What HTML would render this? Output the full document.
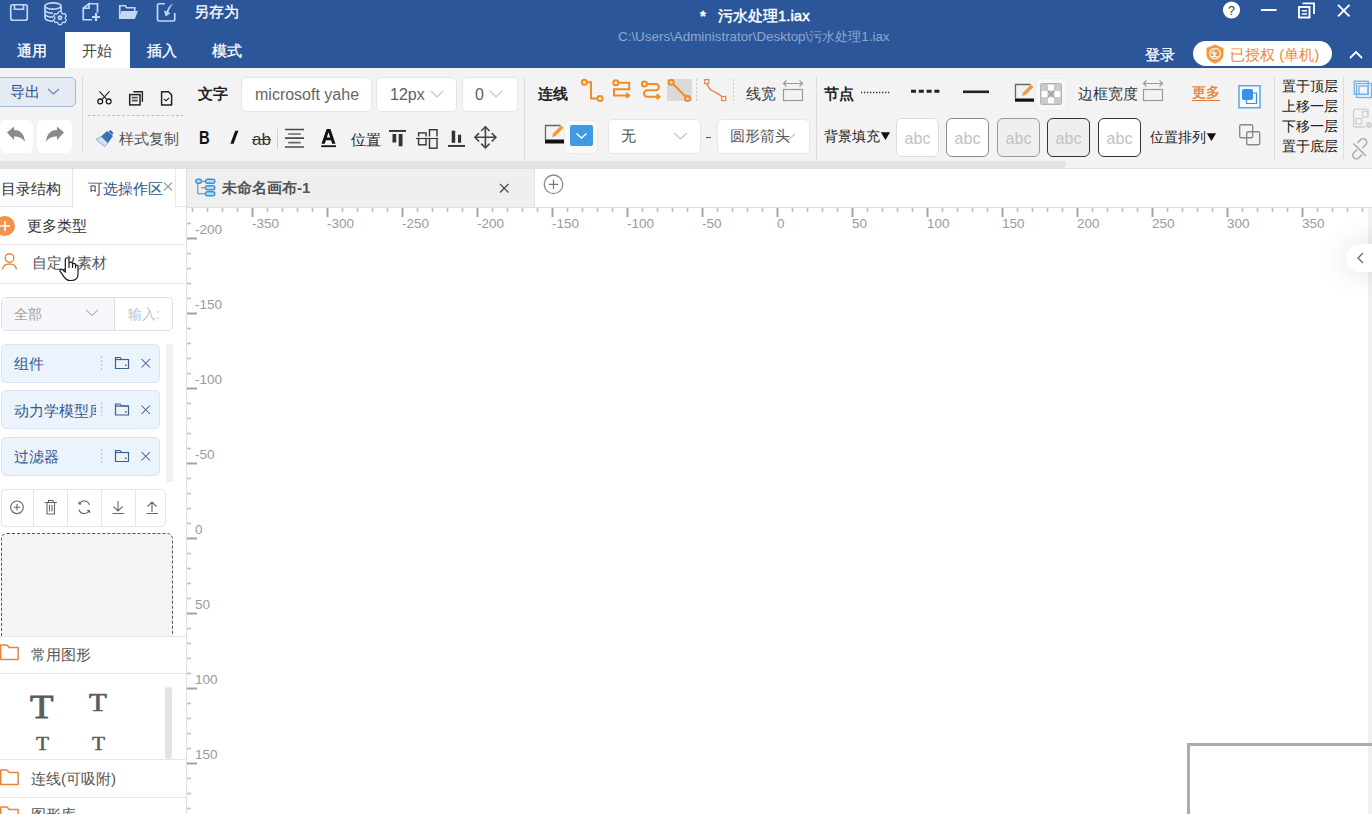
<!DOCTYPE html>
<html><head><meta charset="utf-8">
<style>
*{box-sizing:border-box;margin:0;padding:0}
html,body{width:1372px;height:814px;overflow:hidden;background:#fff;font-family:"Liberation Sans",sans-serif;position:relative;color:#333}
.a{position:absolute;white-space:nowrap}
.t15{font-size:15px;line-height:15px}
.t14{font-size:14px;line-height:14px}
.t13{font-size:13px;line-height:13px}
.wt{color:#fff;-webkit-text-stroke:.3px #fff}
.b{font-weight:bold}
svg{position:absolute;overflow:visible}
.box{position:absolute;background:#fff;border:1px solid #e6e6e6;border-radius:5px}
.sep{position:absolute;width:1px;background:#dcdcdc}
.abc{position:absolute;top:118px;width:43px;height:39px;border-radius:6px;font-size:16px;line-height:39px;text-align:center;color:#c2c2c2}
.item{position:absolute;left:1px;width:159px;height:39px;background:#ebf3fd;border:1px solid #d8e4f3;border-radius:5px}
.lay{font-size:14px;line-height:14px;color:#222}
</style></head><body>
<!-- ============ HEADER ============ -->
<div class="a" style="left:0;top:0;width:1372px;height:68px;background:#2b579a"></div>
<svg style="left:0;top:0" width="260" height="30" fill="none" stroke="#c2d7f5" stroke-width="1.7">
  <!-- save -->
  <rect x="10.75" y="4.75" width="16.5" height="15.5" rx="2"/>
  <path d="M14.5 4.75v4.5h9v-4.5"/>
  <!-- database gear -->
  <ellipse cx="53" cy="6" rx="8" ry="3.2"/>
  <path d="M45 6v12c0 1.8 3.6 3.2 8 3.2M61 6v5M45 10c0 1.8 3.6 3.2 8 3.2M45 14c0 1.8 3.6 3.2 8 3.2"/>
  <path d="M58.6 11.6h2.8l.5 1.6 1.5.9 1.6-.4 1.4 2.4-1.1 1.2v1.6l1.1 1.2-1.4 2.4-1.6-.4-1.5.9-.5 1.6h-2.8l-.5-1.6-1.5-.9-1.6.4-1.4-2.4 1.1-1.2v-1.6l-1.1-1.2 1.4-2.4 1.6.4 1.5-.9z" stroke-width="1.3" stroke-linejoin="round"/><circle cx="60" cy="17.8" r="1.6"/>
  <!-- new file -->
  <path d="M89 3.75h8.5v9M92 19.75h-8.75v-11.5l5.75-4.5v4.5h-5"/>
  <path d="M96 13v8M92 17h8" stroke-width="2.2"/>
  <!-- edit/export -->
  <path d="M165 3.75h-6a1.5 1.5 0 0 0-1.5 1.5v14.25a1.5 1.5 0 0 0 1.5 1.5h14.25a1.5 1.5 0 0 0 1.5-1.5v-6.5"/>
  <path d="M119.75 18.5V5.75h5.5l1.5 2h8v3"/>
</svg>
<svg style="left:0;top:0" width="260" height="30">
  <path d="M121.5 11h16.5l-3.2 8h-16z" fill="#c2d7f5"/>
  <path d="M173.8 3.2c-3.8 1.6-6.2 4.6-7.2 8.3l-2.6-1.1 1.6 6.1 5.2-3.6-2.4-.7c.8-3.3 2.5-6.3 5.4-9z" fill="#c2d7f5"/>
</svg>
<div class="a t15 wt" style="left:194px;top:4px">另存为</div>
<div class="a t15 wt" style="left:17px;top:43px">通用</div>
<div class="a" style="left:65px;top:32px;width:65px;height:36px;background:#fff"></div>
<div class="a t15" style="left:82px;top:43px;color:#444">开始</div>
<div class="a t15 wt" style="left:147px;top:43px">插入</div>
<div class="a t15 wt" style="left:212px;top:43px">模式</div>
<div class="a t15 wt" style="left:700px;top:8px;font-weight:bold">*</div><div class="a t15 wt" style="left:718px;top:8px;-webkit-text-stroke:.45px #fff">污水处理1.iax</div>
<div class="a" style="left:618px;top:30px;font-size:13.4px;line-height:14px;color:#8ea7cf">C:\Users\Administrator\Desktop\污水处理1.iax</div>
<!-- window controls -->
<svg style="left:1200px;top:0" width="172" height="30">
  <circle cx="31.5" cy="10" r="8.6" fill="#fff"/>
  <text x="31.5" y="14.6" font-size="12.5" text-anchor="middle" fill="#3a3a3a" font-family="Liberation Sans">?</text>
  <path d="M61 10h15.5" stroke="#fff" stroke-width="2"/>
  <rect x="99" y="7" width="10.5" height="10.5" fill="none" stroke="#fff" stroke-width="1.9"/>
  <path d="M102.5 3.3h11.5v10.8" fill="none" stroke="#fff" stroke-width="1.8"/>
  <path d="M101.8 10.8h5.2M101.8 14h5.2" fill="none" stroke="#fff" stroke-width="1.5"/>
  <path d="M138 4.8l11.5 11.5M149.5 4.8l-11.5 11.5" stroke="#fff" stroke-width="1.9"/>
</svg>
<div class="a t15 wt" style="left:1145px;top:47px">登录</div>
<div class="a" style="left:1193px;top:41px;width:139px;height:25px;background:#fff;border-radius:13px"></div>
<svg style="left:1205px;top:43px" width="22" height="22">
  <path d="M10 1.5l8.5 3.5v6c0 5-4 8.2-8.5 9.8C5.5 19.2 1.5 16 1.5 11V5z" fill="#f19a3e"/>
  <circle cx="10" cy="10.5" r="5.3" fill="none" stroke="#fff" stroke-width="1.1"/>
  <path d="M10 6.5l-3 3.5h2v3.5h-2.5M10 10v3.5h2.5M8 10h4" fill="none" stroke="#fff" stroke-width="1.1"/>
</svg>
<div class="a t15" style="left:1230px;top:47px;color:#ee8a3a">已授权 (单机)</div>
<svg style="left:1349px;top:50px" width="14" height="10"><path d="M1 8l6-6 6 6" fill="none" stroke="#fff" stroke-width="1.8"/></svg>

<!-- ============ TOOLBAR ============ -->
<div class="a" style="left:0;top:68px;width:1372px;height:93px;background:#f3f3f3"></div>
<div class="a" style="left:0;top:161px;width:1372px;height:7px;background:#f3f3f3"></div>
<div class="a" style="left:0;top:161px;width:1066px;height:7px;background:#e4e4e4;border-radius:0 4px 4px 0"></div>
<div class="a" style="left:0;top:168px;width:1372px;height:1px;background:#e0e0e0"></div>
<!-- export -->
<div class="a" style="left:-4px;top:77px;width:80px;height:30px;background:#e4ebf5;border:1px solid #a9b8cf;border-radius:5px"></div>
<div class="a t15" style="left:10px;top:84px;color:#2b4f86">导出</div>
<svg style="left:47px;top:88px" width="14" height="8"><path d="M1 1l5.5 5 5.5-5" fill="none" stroke="#6b83a8" stroke-width="1.2"/></svg>
<div class="a" style="left:0;top:120px;width:33px;height:33px;background:#fff;border-radius:6px"></div>
<div class="a" style="left:37px;top:120px;width:35px;height:33px;background:#fff;border-radius:6px"></div>
<svg style="left:0;top:120px" width="80" height="33">
  <path d="M7 12.5l7-6v3.5c6 0 10 3 11 12-2.5-4-6-5.5-11-5.5v3.5z" fill="#8a8a8a"/>
  <path d="M64 12.5l-7-6v3.5c-6 0-10 3-11 12 2.5-4 6-5.5 11-5.5v3.5z" fill="#8a8a8a"/>
</svg>
<div class="sep" style="left:82px;top:76px;height:76px;background:#dedede"></div>
<!-- clipboard icons -->
<svg style="left:90px;top:86px" width="95" height="22" fill="none" stroke="#222" stroke-width="1.3">
  <circle cx="10.2" cy="15.4" r="2.4"/><circle cx="18.7" cy="15.4" r="2.4"/>
  <path d="M9.4 5.3l7.6 8.3M19.5 5.3l-7.6 8.3" stroke-width="1.1"/>
  <rect x="39.7" y="8.6" width="10.3" height="10.3" stroke-width="1.5"/>
  <path d="M43.4 5.8h9v9.9" stroke-width="1.4"/><path d="M41.8 11.6h6M41.8 14.6h6" stroke="#555" stroke-width="1.8"/>
  <path d="M71.6 5.7h6.9l3.1 3.1v10.2h-10z" stroke-width="1.5" stroke-linejoin="round"/>
  <path d="M74 13l2 1.8 3-2.8" stroke-width="1.1"/>
</svg>
<svg style="left:88px;top:114px" width="96" height="3"><path d="M0 1.5h95" stroke="#b8b8b8" stroke-width="1" stroke-dasharray="2.5 2.4"/></svg>
<svg style="left:95px;top:130px" width="20" height="18">
  <path d="M1 9.5l6-3.5 6 7-3.5 3.5z" fill="#cfe3f7" stroke="#6a9bd1" stroke-width=".8"/>
  <path d="M6 6.5l6-5.5 6 5-5 7z" fill="#3d6fb5"/>
  <path d="M13.5 1.5l2-1.5 3 3-1.5 2z" fill="#3d6fb5"/>
</svg>
<div class="a t15" style="left:119px;top:131px;color:#555">样式复制</div>
<!-- text group -->
<div class="a t15 b" style="left:198px;top:86px;color:#222">文字</div>
<div class="box" style="left:241px;top:77px;width:131px;height:35px"></div>
<div class="a" style="left:255px;top:86px;width:104px;overflow:hidden;font-size:16px;line-height:18px;color:#666">microsoft yahei</div>
<div class="box" style="left:376px;top:77px;width:81px;height:35px"></div>
<div class="a" style="left:390px;top:86px;font-size:16px;line-height:18px;color:#606060">12px</div>
<svg style="left:430px;top:90px" width="14" height="9"><path d="M1 1l6 6 6-6" fill="none" stroke="#c4c4c4" stroke-width="1.2"/></svg>
<div class="box" style="left:462px;top:77px;width:56px;height:35px"></div>
<div class="a" style="left:475px;top:86px;font-size:16px;line-height:18px;color:#606060">0</div>
<svg style="left:489px;top:90px" width="14" height="9"><path d="M1 1l6 6 6-6" fill="none" stroke="#c4c4c4" stroke-width="1.2"/></svg>
<div class="a" style="left:199px;top:129px;font-size:18px;line-height:18px;font-weight:bold;color:#111;transform:scaleX(.82);transform-origin:0 0">B</div>
<svg style="left:229px;top:130px" width="10" height="15"><path d="M6.2 0.8h3.2L4.6 13.8H1.4z" fill="#111"/></svg>
<div class="a" style="left:252px;top:131px;font-size:17px;line-height:18px;color:#333;text-decoration:line-through">ab</div>
<div class="sep" style="left:277px;top:129px;height:20px;background:#d0d0d0"></div>
<svg style="left:285px;top:128px" width="20" height="20"><path d="M0 1.5h19M0 10.2h19M0 19h19" stroke="#4a4a4a" stroke-width="1.7"/><path d="M3.2 6h12.5M3.2 14.6h12.5" stroke="#6a6a6a" stroke-width="1.7"/></svg>
<svg style="left:320px;top:128px" width="18" height="20">
  <path d="M1.5 15.7L6.6 1h3.8l5.1 14.7h-3.3l-1.1-3.4H5.9l-1.1 3.4zM6.8 9.6h3.4L8.5 4.3z" fill="#111" fill-rule="evenodd"/>
  <path d="M1.2 18.2h14.8" stroke="#111" stroke-width="1.8"/>
</svg>
<div class="a t15" style="left:351px;top:132px;color:#222">位置</div>
<svg style="left:388px;top:128px" width="110" height="22" fill="#333">
  <rect x="1" y="2" width="17" height="1.9"/><rect x="4.5" y="6" width="3.7" height="8.5"/><rect x="10.7" y="6" width="3.8" height="12.3"/>
  <g fill="none" stroke="#333" stroke-width="1.4"><rect x="30.6" y="4.9" width="7.4" height="11.9"/><rect x="41.5" y="1.7" width="7.5" height="18.5"/></g><path d="M28 9.8h22.5" stroke="#f3f3f3" stroke-width="2.6"/><path d="M28 10.5h22.2" stroke="#333" stroke-width="1.1"/>
  <rect x="63.7" y="2.6" width="3.5" height="12.2"/><rect x="70" y="6.7" width="3.1" height="8.1"/><rect x="60" y="17" width="17" height="1.9"/>
  <g fill="none" stroke="#444" stroke-width="1.6" transform="translate(.4 -1.2)"><path d="M97 0v21M86.5 10.5h21"/><path d="M92.8 4.2l4.2-4.2 4.2 4.2M92.8 16.8l4.2 4.2 4.2-4.2M90.7 6.3l-4.2 4.2 4.2 4.2M103.3 6.3l4.2 4.2-4.2 4.2"/></g>
</svg>
<div class="sep" style="left:524px;top:77px;height:83px;background:#dcdcdc"></div>
<!-- connector group -->
<div class="a t15 b" style="left:538px;top:86px;color:#222">连线</div>
<div class="a" style="left:667px;top:79px;width:25px;height:22px;background:#dadada"></div>
<svg style="left:575px;top:77px" width="160" height="30" fill="none" stroke="#f08c24" stroke-width="2">
  <circle cx="9.3" cy="5.3" r="2.5"/><path d="M11.8 5.3h4.2v16.2h6.5"/><circle cx="25" cy="21.5" r="2.5"/>
  <circle cx="40.8" cy="5.8" r="2.5"/><path d="M43.3 5.8h10.9v6.4H39v6.4h14.5M51.3 16.1l2.8 2.5-2.8 2.5"/>
  <circle cx="69.4" cy="6.9" r="2.5"/><path d="M71.9 6.9h8.9a3.2 3.2 0 0 1 0 6.4h-8.6a3.2 3.2 0 0 0 0 6.4h12.4M81.7 17.2l2.8 2.5-2.8 2.5"/>
  <circle cx="96.2" cy="5.2" r="2.5"/><path d="M98 7l12.5 12.5"/><circle cx="112.5" cy="21.5" r="2.5"/>
</svg>
<svg style="left:695px;top:78px" width="42" height="26">
  <path d="M1.5 1v24M38.5 1v24" stroke="#c8c8c8" stroke-width="1" stroke-dasharray="2 2"/>
  <path d="M12 5.5c1 4 2.5 6 6.5 8s8 3.5 10 7" fill="none" stroke="#e8834a" stroke-width="1.3"/>
  <rect x="9.8" y="1.6" width="4" height="4" fill="#fff" stroke="#e8834a" stroke-width="1.3"/>
  <rect x="26.7" y="18.5" width="4" height="4" fill="#fff" stroke="#e8834a" stroke-width="1.3"/>
</svg>
<div class="a t15" style="left:746px;top:86px;color:#333">线宽</div>
<svg style="left:782px;top:79px" width="24" height="24" fill="none" stroke="#9a9a9a" stroke-width="1.2">
  <path d="M1.5 4.5h19M4.5 1.5l-3 3 3 3M17.5 1.5l3 3-3 3"/><rect x="1.5" y="10.5" width="19" height="11"/>
</svg>
<!-- row 2 connector -->
<svg style="left:544px;top:124px" width="22" height="22">
  <path d="M1.5 15.5V1.5h15" fill="none" stroke="#666" stroke-width="1.3"/>
  <rect x="1" y="15.5" width="19" height="4" fill="#111"/>
  <path d="M8 13l1-3.5 8-8 2.5 2.5-8 8z" fill="#f29a3b"/>
</svg>
<div class="a" style="left:564px;top:120px;width:34px;height:34px;background:#f9f9f9;border-radius:6px;border:1px solid #ececec"></div>
<div class="a" style="left:570px;top:125px;width:23px;height:21px;background:#3d9ae3;border-radius:2px"></div>
<svg style="left:575px;top:132px" width="14" height="8"><path d="M1.5 1.5l5 4.5 5-4.5" fill="none" stroke="#fff" stroke-width="1.5"/></svg>
<div class="box" style="left:608px;top:119px;width:93px;height:35px"></div>
<div class="a t15" style="left:621px;top:128px;color:#555">无</div>
<svg style="left:673px;top:132px" width="15" height="9"><path d="M1 1l6.5 6 6.5-6" fill="none" stroke="#c4c4c4" stroke-width="1.2"/></svg>
<div class="a" style="left:706px;top:137px;width:5px;height:1px;background:#555"></div>
<div class="box" style="left:717px;top:119px;width:93px;height:35px"></div>
<div class="a t15" style="left:730px;top:128px;color:#555">圆形箭头</div>
<svg style="left:784px;top:133px" width="12" height="8"><path d="M1 4l3 3 7-6" fill="none" stroke="#c4c4c4" stroke-width="1.2"/></svg>
<div class="sep" style="left:816px;top:77px;height:83px;background:#dcdcdc"></div>
<!-- node group -->
<div class="a t15 b" style="left:824px;top:86px;color:#222">节点</div>
<svg style="left:860px;top:88px" width="132" height="8">
  <path d="M1 4.5h30" stroke="#333" stroke-width="1.3" stroke-dasharray="1.3 1.7"/>
  <path d="M51 3.2h29" stroke="#222" stroke-width="3" stroke-dasharray="5 2.8"/>
  <path d="M103 3.8h26" stroke="#222" stroke-width="2.6"/>
</svg>
<svg style="left:1014px;top:83px" width="22" height="22">
  <path d="M1.5 15.5V1.5h15" fill="none" stroke="#666" stroke-width="1.3"/>
  <rect x="1" y="15.5" width="19" height="3.2" fill="#111"/>
  <path d="M8 13l1-3.5 8-8 2.5 2.5-8 8z" fill="#f29a3b"/>
</svg>
<div class="a" style="left:1035px;top:78px;width:33px;height:33px;background:#f7f7f7;border-radius:6px;border:1px solid #ececec"></div>
<svg style="left:1040px;top:83px" width="23" height="23">
  <rect x=".75" y=".75" width="20.5" height="20.5" rx="1.5" fill="#fff" stroke="#b4b4b4" stroke-width="1.5"/>
  <g fill="#cacaca"><rect x="1" y="1" width="7" height="7"/><rect x="14" y="1" width="7" height="7"/><rect x="7.5" y="7.5" width="7" height="7"/><rect x="1" y="14" width="7" height="7"/><rect x="14" y="14" width="7" height="7"/></g>
  <path d="M8 8l6 6M14 8l-6 6" stroke="#9a9a9a" stroke-width="1.3"/>
</svg>
<div class="a t15" style="left:1078px;top:86px;color:#333">边框宽度</div>
<svg style="left:1142px;top:79px" width="24" height="24" fill="none" stroke="#9a9a9a" stroke-width="1.2">
  <path d="M1.5 4.5h19M4.5 1.5l-3 3 3 3M17.5 1.5l3 3-3 3"/><rect x="1.5" y="10.5" width="19" height="11"/>
</svg>
<div class="a" style="left:1192px;top:86px;font-size:14px;color:#e8782a;-webkit-text-stroke:.25px #e8782a;border-bottom:1.5px solid #e8782a;line-height:13px;height:15px">更多</div>
<div class="a t14" style="left:824px;top:129px;color:#222">背景填充</div><svg style="left:880px;top:132px" width="11" height="9"><path d="M.8 .2h9.3L5.45 8z" fill="#111"/></svg>
<div class="abc" style="left:896px;background:#fff;border:1px solid #dcdcdc">abc</div>
<div class="abc" style="left:946px;background:#fff;border:1.5px solid #8a8a8a">abc</div>
<div class="abc" style="left:997px;background:#efefef;border:1.5px solid #9a9a9a">abc</div>
<div class="abc" style="left:1047px;background:#efefef;border:1.5px solid #333">abc</div>
<div class="abc" style="left:1098px;background:#fff;border:1.5px solid #333">abc</div>
<div class="a t14" style="left:1150px;top:130px;color:#222">位置排列</div><svg style="left:1206px;top:133px" width="11" height="9"><path d="M.8 .2h9.3L5.45 8z" fill="#111"/></svg>
<svg style="left:1237px;top:84px" width="26" height="64">
  <rect x="2" y="1.75" width="21" height="22" fill="#f4faff" stroke="#5aa7ea" stroke-width="1.5"/>
  <rect x="5" y="5" width="11" height="11" rx="2" fill="#3893e6"/>
  <path d="M9.5 16V9h10v10.5h-10z" fill="none" stroke="#3893e6" stroke-width="1.2"/>
  <g fill="none" stroke="#8a8a8a" stroke-width="1.4"><rect x="2.7" y="40.7" width="13" height="13" rx="1.5"/><rect x="9.7" y="47.7" width="13" height="13" rx="1.5"/></g>
</svg>
<div class="sep" style="left:1274px;top:77px;height:83px;background:#dcdcdc"></div>
<div class="a lay" style="left:1282px;top:79px">置于顶层</div>
<div class="a lay" style="left:1282px;top:99px">上移一层</div>
<div class="a lay" style="left:1282px;top:119px">下移一层</div>
<div class="a lay" style="left:1282px;top:139px">置于底层</div>
<div class="sep" style="left:1343px;top:77px;height:83px;background:#dcdcdc"></div>
<svg style="left:1350px;top:78px" width="22" height="82" fill="none">
  <g stroke="#72b2ea" stroke-width="1.3"><rect x="4.2" y="3.2" width="14" height="13"/><rect x="6.5" y="5.5" width="15" height="14"/><rect x="9" y="8" width="9" height="8.5"/></g>
  <g stroke="#cfcfcf" stroke-width="1.3"><path d="M18 37.5v-4.8a1.6 1.6 0 0 0-1.6-1.6H5.2a1.6 1.6 0 0 0-1.6 1.6v14.7a1.6 1.6 0 0 0 1.6 1.6h10"/><rect x="12.5" y="33.5" width="5.5" height="5.5"/><rect x="6" y="40.5" width="5.5" height="5.5"/><circle cx="19" cy="47" r="2.3" fill="#d8d8d8"/></g>
  <g stroke="#a8a8a8" stroke-width="1.5" transform="translate(-1.5 2)"><path d="M8.5 69.5l-3.2 3.2a3.6 3.6 0 0 0 5.1 5.1l3.2-3.2M14 68l3.2-3.2a3.6 3.6 0 0 0-5.1-5.1l-3.2 3.2M5 63.5l12.5 12.5"/></g>
</svg>

<!-- ============ LEFT PANEL ============ -->
<div class="a" style="left:0;top:169px;width:73px;height:38px;background:#fcfcfc;border-right:1px solid #e4e4e4;border-bottom:1px solid #e4e4e4"></div>
<div class="a t15" style="left:1px;top:181px;color:#333">目录结构</div>
<div class="a" style="left:175px;top:169px;width:12px;height:38px;border-left:1px solid #e8e8e8;border-bottom:1px solid #e4e4e4"></div>
<div class="a t15" style="left:88px;top:181px;color:#2f5487">可选操作区</div>
<svg style="left:163px;top:182px" width="10" height="9"><path d="M1 .5l8 8M9 .5l-8 8" stroke="#999" stroke-width="1.1"/></svg>
<div class="a" style="left:186px;top:169px;width:1px;height:645px;background:#e0e0e0"></div>
<!-- more types -->
<svg style="left:0;top:215px" width="20" height="22"><circle cx="5" cy="11" r="10" fill="#f39248"/><path d="M0 11h10M5 6v10" stroke="#fff" stroke-width="1.6"/></svg>
<div class="a t15" style="left:27px;top:218px;color:#333">更多类型</div>
<div class="a" style="left:0;top:244px;width:185px;height:1px;background:#e8e8e8"></div>
<svg style="left:1px;top:252px" width="18" height="20" fill="none" stroke="#e88a45" stroke-width="1.4"><circle cx="8.5" cy="6" r="4.3"/><path d="M1.5 17.5c.5-3.5 3-5.5 7-5.5s6.5 2 7 5.5"/></svg>
<div class="a" style="left:32px;top:256px;font-size:14.6px;line-height:15px;color:#555">自定义素材</div>
<svg style="left:55px;top:250px" width="30" height="34">
  <path d="M10.3 22V9.6a1.85 1.85 0 0 1 3.7 0V17.5V13.8a1.75 1.75 0 0 1 3.5 0V17.5V14.8a1.5 1.5 0 0 1 3 0V17.8V16.3a1.25 1.25 0 0 1 2.5 0V24.2c0 4-2.6 6.3-6.8 6.3h-1.4c-2.6 0-4.2-1.3-5.6-3.4l-4-5.7c-.9-1.3.7-2.8 2-1.9z" fill="#fff" stroke="#1a1a1a" stroke-width="1.2" stroke-linejoin="round"/>
</svg>
<div class="a" style="left:0;top:283px;width:185px;height:1px;background:#e8e8e8"></div>
<!-- filter -->
<div class="a" style="left:1px;top:297px;width:172px;height:34px;border:1px solid #dcdfe6;border-radius:5px;background:#fff;overflow:hidden">
  <div class="a" style="left:0;top:0;width:113px;height:32px;background:#f5f7fa;border-right:1px solid #dcdfe6"></div>
</div>
<div class="a t14" style="left:14px;top:307px;color:#a0a0a0">全部</div>
<svg style="left:85px;top:309px" width="14" height="8"><path d="M1 1l6 5.5 6-5.5" fill="none" stroke="#b8b8b8" stroke-width="1.2"/></svg>
<div class="a t14" style="left:128px;top:307px;width:31px;overflow:hidden;color:#c0c4cc">输入:</div>
<!-- items -->
<div class="item" style="top:344px"></div>
<div class="item" style="top:390px"></div>
<div class="item" style="top:437px"></div>
<div class="a t15" style="left:14px;top:356px;color:#35598c">组件</div>
<div class="a t15" style="left:14px;top:403px;width:82px;overflow:hidden;color:#35598c">动力学模型库</div>
<div class="a t15" style="left:14px;top:449px;color:#35598c">过滤器</div>
<svg style="left:100px;top:344px" width="56" height="135" fill="none" stroke="#3f5f8e" stroke-width="1.2">
  <g id="ic"><path d="M1.5 12v16" stroke="#b8c6d8" stroke-dasharray="2 2"/>
  <path d="M15.5 24.5v-11h4.5l1.5 2h7v9z"/><path d="M15.5 15.5h13"/><path d="M25 21.2h1.5" stroke-width="1.4"/>
  <path d="M41.5 15l8.5 8.5M50 15l-8.5 8.5" stroke-width="1.05"/></g>
  <use href="#ic" y="46.5"/><use href="#ic" y="93"/>
</svg>
<div class="a" style="left:166px;top:344px;width:7px;height:138px;background:#f1f1f1"></div>
<!-- button group -->
<div class="a" style="left:1px;top:489px;width:165px;height:38px;border:1px solid #e4e4e4;border-radius:5px;background:#fff"></div>
<div class="sep" style="left:33px;top:490px;height:36px;background:#e4e4e4"></div>
<div class="sep" style="left:67px;top:490px;height:36px;background:#e4e4e4"></div>
<div class="sep" style="left:101px;top:490px;height:36px;background:#e4e4e4"></div>
<div class="sep" style="left:135px;top:490px;height:36px;background:#e4e4e4"></div>
<svg style="left:0;top:495px" width="166" height="25" fill="none" stroke="#666" stroke-width="1.1">
  <circle cx="17" cy="12.3" r="6.3"/><path d="M17 9v6.6M13.7 12.3h6.6"/>
  <path d="M44.5 7.5h12.5M47 7.5v11.5h7.5v-11.5M48.5 7.5v-2h4.5v2M49.5 10v6.5M52 10v6.5"/>
  <path d="M89.5 10a5.5 5.5 0 0 0-10-1.5M79 14.5a5.5 5.5 0 0 0 10 1.5M79 6.5v2.5h2.5M89.5 18v-2.5H87"/>
  <path d="M118 6v10M113.5 11.5l4.5 4.5 4.5-4.5M112.5 18.5h11.5"/>
  <path d="M152 17V7M147.5 11.5L152 7l4.5 4.5M146.5 18.5H158"/>
</svg>
<div class="a" style="left:1px;top:533px;width:172px;height:110px;background:#f4f4f4;border:1px dashed #555;border-radius:6px"></div>
<!-- sections -->
<div class="a" style="left:0;top:636px;width:186px;height:178px;background:#fff"></div>
<div class="a" style="left:0;top:636px;width:186px;height:1px;background:#e8e8e8"></div>
<svg style="left:0;top:644px" width="20" height="17"><path d="M.75 1h6.2l2.3 2.6h8.9v12H.75z" fill="none" stroke="#e8853d" stroke-width="1.5" stroke-linejoin="round"/></svg>
<div class="a t15" style="left:31px;top:647px;color:#555">常用图形</div>
<div class="a" style="left:0;top:673px;width:186px;height:1px;background:#e8e8e8"></div>
<div class="a" style="left:30px;top:690px;font-family:'Liberation Serif',serif;font-size:34px;line-height:34px;color:#5c5c5c;-webkit-text-stroke:.9px #5c5c5c;transform:scaleX(1.13);transform-origin:0 0">T</div>
<div class="a" style="left:89px;top:690px;font-family:'Liberation Serif',serif;font-size:26px;line-height:26px;color:#5c5c5c;-webkit-text-stroke:.7px #5c5c5c;transform:scaleX(1.12);transform-origin:0 0">T</div>
<div class="a" style="left:36px;top:734px;font-family:'Liberation Serif',serif;font-size:19px;line-height:19px;color:#5c5c5c;-webkit-text-stroke:.5px #5c5c5c;transform:scaleX(1.12);transform-origin:0 0">T</div>
<div class="a" style="left:92px;top:734px;font-family:'Liberation Serif',serif;font-size:19px;line-height:19px;color:#5c5c5c;-webkit-text-stroke:.5px #5c5c5c;transform:scaleX(1.12);transform-origin:0 0">T</div>
<div class="a" style="left:165px;top:687px;width:7px;height:72px;background:#e3e3e3;border-radius:3px"></div>
<div class="a" style="left:0;top:759px;width:186px;height:1px;background:#e8e8e8"></div>
<svg style="left:0;top:769px" width="20" height="17"><path d="M.75 1h6.2l2.3 2.6h8.9v12H.75z" fill="none" stroke="#e8853d" stroke-width="1.5" stroke-linejoin="round"/></svg>
<div class="a t15" style="left:31px;top:771px;color:#555">连线(可吸附)</div>
<div class="a" style="left:0;top:797px;width:186px;height:1px;background:#e8e8e8"></div>
<svg style="left:0;top:806px" width="20" height="17"><path d="M.75 1h6.2l2.3 2.6h8.9v12H.75z" fill="none" stroke="#e8853d" stroke-width="1.5" stroke-linejoin="round"/></svg>
<div class="a t15" style="left:31px;top:807px;color:#555">图形库</div>

<!-- ============ CANVAS ============ -->
<div class="a" style="left:187px;top:169px;width:348px;height:38px;background:#efefef;border-right:1px solid #e2e2e2"></div>
<div class="a" style="left:187px;top:207px;width:1185px;height:1px;background:#dedede"></div>
<svg style="left:195px;top:178px" width="21" height="20">
  <path d="M6.5 3.3h4M2.8 5.3v10.5h7.7M6 9.8h4.5" fill="none" stroke="#5a7fa8" stroke-width="1"/>
  <g fill="#a6e3fb" stroke="#3f8fd9" stroke-width="1.4"><rect x=".7" y="1.3" width="5.8" height="4" rx="2"/><rect x="10.5" y="1.3" width="9.3" height="4" rx="2"/><rect x="10.5" y="7.8" width="9.3" height="4" rx="2"/><rect x="10.5" y="13.8" width="9.3" height="4" rx="2"/></g>
</svg>
<div class="a t15 b" style="left:222px;top:180px;color:#555">未命名画布-1</div>
<svg style="left:499px;top:183px" width="11" height="10"><path d="M1 1l8.5 8.5M9.5 1L1 9.5" stroke="#444" stroke-width="1.1"/></svg>
<svg style="left:542px;top:173px" width="23" height="23"><circle cx="11.5" cy="11.3" r="9.3" fill="none" stroke="#8a8a8a" stroke-width="1.3"/><path d="M11.5 6.5v9.5M6.8 11.3h9.5" stroke="#777" stroke-width="1.2"/></svg>
<svg style="left:0;top:0" width="1372" height="814"><path d="M192.5 208v4" stroke="#c2c2c2" stroke-width="1.7"/><path d="M207.5 208v4" stroke="#c2c2c2" stroke-width="1.7"/><path d="M222.5 208v4" stroke="#c2c2c2" stroke-width="1.7"/><path d="M237.5 208v4" stroke="#c2c2c2" stroke-width="1.7"/><path d="M252.5 208v9" stroke="#a4a4a4" stroke-width="2"/><path d="M267.5 208v4" stroke="#c2c2c2" stroke-width="1.7"/><path d="M282.5 208v4" stroke="#c2c2c2" stroke-width="1.7"/><path d="M297.5 208v4" stroke="#c2c2c2" stroke-width="1.7"/><path d="M312.5 208v4" stroke="#c2c2c2" stroke-width="1.7"/><path d="M327.5 208v9" stroke="#a4a4a4" stroke-width="2"/><path d="M342.5 208v4" stroke="#c2c2c2" stroke-width="1.7"/><path d="M357.5 208v4" stroke="#c2c2c2" stroke-width="1.7"/><path d="M372.5 208v4" stroke="#c2c2c2" stroke-width="1.7"/><path d="M387.5 208v4" stroke="#c2c2c2" stroke-width="1.7"/><path d="M402.5 208v9" stroke="#a4a4a4" stroke-width="2"/><path d="M417.5 208v4" stroke="#c2c2c2" stroke-width="1.7"/><path d="M432.5 208v4" stroke="#c2c2c2" stroke-width="1.7"/><path d="M447.5 208v4" stroke="#c2c2c2" stroke-width="1.7"/><path d="M462.5 208v4" stroke="#c2c2c2" stroke-width="1.7"/><path d="M477.5 208v9" stroke="#a4a4a4" stroke-width="2"/><path d="M492.5 208v4" stroke="#c2c2c2" stroke-width="1.7"/><path d="M507.5 208v4" stroke="#c2c2c2" stroke-width="1.7"/><path d="M522.5 208v4" stroke="#c2c2c2" stroke-width="1.7"/><path d="M537.5 208v4" stroke="#c2c2c2" stroke-width="1.7"/><path d="M552.5 208v9" stroke="#a4a4a4" stroke-width="2"/><path d="M567.5 208v4" stroke="#c2c2c2" stroke-width="1.7"/><path d="M582.5 208v4" stroke="#c2c2c2" stroke-width="1.7"/><path d="M597.5 208v4" stroke="#c2c2c2" stroke-width="1.7"/><path d="M612.5 208v4" stroke="#c2c2c2" stroke-width="1.7"/><path d="M627.5 208v9" stroke="#a4a4a4" stroke-width="2"/><path d="M642.5 208v4" stroke="#c2c2c2" stroke-width="1.7"/><path d="M657.5 208v4" stroke="#c2c2c2" stroke-width="1.7"/><path d="M672.5 208v4" stroke="#c2c2c2" stroke-width="1.7"/><path d="M687.5 208v4" stroke="#c2c2c2" stroke-width="1.7"/><path d="M702.5 208v9" stroke="#a4a4a4" stroke-width="2"/><path d="M717.5 208v4" stroke="#c2c2c2" stroke-width="1.7"/><path d="M732.5 208v4" stroke="#c2c2c2" stroke-width="1.7"/><path d="M747.5 208v4" stroke="#c2c2c2" stroke-width="1.7"/><path d="M762.5 208v4" stroke="#c2c2c2" stroke-width="1.7"/><path d="M777.5 208v9" stroke="#a4a4a4" stroke-width="2"/><path d="M792.5 208v4" stroke="#c2c2c2" stroke-width="1.7"/><path d="M807.5 208v4" stroke="#c2c2c2" stroke-width="1.7"/><path d="M822.5 208v4" stroke="#c2c2c2" stroke-width="1.7"/><path d="M837.5 208v4" stroke="#c2c2c2" stroke-width="1.7"/><path d="M852.5 208v9" stroke="#a4a4a4" stroke-width="2"/><path d="M867.5 208v4" stroke="#c2c2c2" stroke-width="1.7"/><path d="M882.5 208v4" stroke="#c2c2c2" stroke-width="1.7"/><path d="M897.5 208v4" stroke="#c2c2c2" stroke-width="1.7"/><path d="M912.5 208v4" stroke="#c2c2c2" stroke-width="1.7"/><path d="M927.5 208v9" stroke="#a4a4a4" stroke-width="2"/><path d="M942.5 208v4" stroke="#c2c2c2" stroke-width="1.7"/><path d="M957.5 208v4" stroke="#c2c2c2" stroke-width="1.7"/><path d="M972.5 208v4" stroke="#c2c2c2" stroke-width="1.7"/><path d="M987.5 208v4" stroke="#c2c2c2" stroke-width="1.7"/><path d="M1002.5 208v9" stroke="#a4a4a4" stroke-width="2"/><path d="M1017.5 208v4" stroke="#c2c2c2" stroke-width="1.7"/><path d="M1032.5 208v4" stroke="#c2c2c2" stroke-width="1.7"/><path d="M1047.5 208v4" stroke="#c2c2c2" stroke-width="1.7"/><path d="M1062.5 208v4" stroke="#c2c2c2" stroke-width="1.7"/><path d="M1077.5 208v9" stroke="#a4a4a4" stroke-width="2"/><path d="M1092.5 208v4" stroke="#c2c2c2" stroke-width="1.7"/><path d="M1107.5 208v4" stroke="#c2c2c2" stroke-width="1.7"/><path d="M1122.5 208v4" stroke="#c2c2c2" stroke-width="1.7"/><path d="M1137.5 208v4" stroke="#c2c2c2" stroke-width="1.7"/><path d="M1152.5 208v9" stroke="#a4a4a4" stroke-width="2"/><path d="M1167.5 208v4" stroke="#c2c2c2" stroke-width="1.7"/><path d="M1182.5 208v4" stroke="#c2c2c2" stroke-width="1.7"/><path d="M1197.5 208v4" stroke="#c2c2c2" stroke-width="1.7"/><path d="M1212.5 208v4" stroke="#c2c2c2" stroke-width="1.7"/><path d="M1227.5 208v9" stroke="#a4a4a4" stroke-width="2"/><path d="M1242.5 208v4" stroke="#c2c2c2" stroke-width="1.7"/><path d="M1257.5 208v4" stroke="#c2c2c2" stroke-width="1.7"/><path d="M1272.5 208v4" stroke="#c2c2c2" stroke-width="1.7"/><path d="M1287.5 208v4" stroke="#c2c2c2" stroke-width="1.7"/><path d="M1302.5 208v9" stroke="#a4a4a4" stroke-width="2"/><path d="M1317.5 208v4" stroke="#c2c2c2" stroke-width="1.7"/><path d="M1332.5 208v4" stroke="#c2c2c2" stroke-width="1.7"/><path d="M1347.5 208v4" stroke="#c2c2c2" stroke-width="1.7"/><path d="M1362.5 208v4" stroke="#c2c2c2" stroke-width="1.7"/><text x="252" y="228" font-size="13.5" fill="#9a9a9a" font-family="Liberation Sans">-350</text><text x="327" y="228" font-size="13.5" fill="#9a9a9a" font-family="Liberation Sans">-300</text><text x="402" y="228" font-size="13.5" fill="#9a9a9a" font-family="Liberation Sans">-250</text><text x="477" y="228" font-size="13.5" fill="#9a9a9a" font-family="Liberation Sans">-200</text><text x="552" y="228" font-size="13.5" fill="#9a9a9a" font-family="Liberation Sans">-150</text><text x="627" y="228" font-size="13.5" fill="#9a9a9a" font-family="Liberation Sans">-100</text><text x="702" y="228" font-size="13.5" fill="#9a9a9a" font-family="Liberation Sans">-50</text><text x="777" y="228" font-size="13.5" fill="#9a9a9a" font-family="Liberation Sans">0</text><text x="852" y="228" font-size="13.5" fill="#9a9a9a" font-family="Liberation Sans">50</text><text x="927" y="228" font-size="13.5" fill="#9a9a9a" font-family="Liberation Sans">100</text><text x="1002" y="228" font-size="13.5" fill="#9a9a9a" font-family="Liberation Sans">150</text><text x="1077" y="228" font-size="13.5" fill="#9a9a9a" font-family="Liberation Sans">200</text><text x="1152" y="228" font-size="13.5" fill="#9a9a9a" font-family="Liberation Sans">250</text><text x="1227" y="228" font-size="13.5" fill="#9a9a9a" font-family="Liberation Sans">300</text><text x="1302" y="228" font-size="13.5" fill="#9a9a9a" font-family="Liberation Sans">350</text><path d="M187 223.5h4" stroke="#c2c2c2" stroke-width="1.7"/><path d="M187 238.5h10" stroke="#a4a4a4" stroke-width="2"/><path d="M187 253.5h4" stroke="#c2c2c2" stroke-width="1.7"/><path d="M187 268.5h4" stroke="#c2c2c2" stroke-width="1.7"/><path d="M187 283.5h4" stroke="#c2c2c2" stroke-width="1.7"/><path d="M187 298.5h4" stroke="#c2c2c2" stroke-width="1.7"/><path d="M187 313.5h10" stroke="#a4a4a4" stroke-width="2"/><path d="M187 328.5h4" stroke="#c2c2c2" stroke-width="1.7"/><path d="M187 343.5h4" stroke="#c2c2c2" stroke-width="1.7"/><path d="M187 358.5h4" stroke="#c2c2c2" stroke-width="1.7"/><path d="M187 373.5h4" stroke="#c2c2c2" stroke-width="1.7"/><path d="M187 388.5h10" stroke="#a4a4a4" stroke-width="2"/><path d="M187 403.5h4" stroke="#c2c2c2" stroke-width="1.7"/><path d="M187 418.5h4" stroke="#c2c2c2" stroke-width="1.7"/><path d="M187 433.5h4" stroke="#c2c2c2" stroke-width="1.7"/><path d="M187 448.5h4" stroke="#c2c2c2" stroke-width="1.7"/><path d="M187 463.5h10" stroke="#a4a4a4" stroke-width="2"/><path d="M187 478.5h4" stroke="#c2c2c2" stroke-width="1.7"/><path d="M187 493.5h4" stroke="#c2c2c2" stroke-width="1.7"/><path d="M187 508.5h4" stroke="#c2c2c2" stroke-width="1.7"/><path d="M187 523.5h4" stroke="#c2c2c2" stroke-width="1.7"/><path d="M187 538.5h10" stroke="#a4a4a4" stroke-width="2"/><path d="M187 553.5h4" stroke="#c2c2c2" stroke-width="1.7"/><path d="M187 568.5h4" stroke="#c2c2c2" stroke-width="1.7"/><path d="M187 583.5h4" stroke="#c2c2c2" stroke-width="1.7"/><path d="M187 598.5h4" stroke="#c2c2c2" stroke-width="1.7"/><path d="M187 613.5h10" stroke="#a4a4a4" stroke-width="2"/><path d="M187 628.5h4" stroke="#c2c2c2" stroke-width="1.7"/><path d="M187 643.5h4" stroke="#c2c2c2" stroke-width="1.7"/><path d="M187 658.5h4" stroke="#c2c2c2" stroke-width="1.7"/><path d="M187 673.5h4" stroke="#c2c2c2" stroke-width="1.7"/><path d="M187 688.5h10" stroke="#a4a4a4" stroke-width="2"/><path d="M187 703.5h4" stroke="#c2c2c2" stroke-width="1.7"/><path d="M187 718.5h4" stroke="#c2c2c2" stroke-width="1.7"/><path d="M187 733.5h4" stroke="#c2c2c2" stroke-width="1.7"/><path d="M187 748.5h4" stroke="#c2c2c2" stroke-width="1.7"/><path d="M187 763.5h10" stroke="#a4a4a4" stroke-width="2"/><path d="M187 778.5h4" stroke="#c2c2c2" stroke-width="1.7"/><path d="M187 793.5h4" stroke="#c2c2c2" stroke-width="1.7"/><path d="M187 808.5h4" stroke="#c2c2c2" stroke-width="1.7"/><text x="195" y="234" font-size="13.5" fill="#9a9a9a" font-family="Liberation Sans">-200</text><text x="195" y="309" font-size="13.5" fill="#9a9a9a" font-family="Liberation Sans">-150</text><text x="195" y="384" font-size="13.5" fill="#9a9a9a" font-family="Liberation Sans">-100</text><text x="195" y="459" font-size="13.5" fill="#9a9a9a" font-family="Liberation Sans">-50</text><text x="195" y="534" font-size="13.5" fill="#9a9a9a" font-family="Liberation Sans">0</text><text x="195" y="609" font-size="13.5" fill="#9a9a9a" font-family="Liberation Sans">50</text><text x="195" y="684" font-size="13.5" fill="#9a9a9a" font-family="Liberation Sans">100</text><text x="195" y="759" font-size="13.5" fill="#9a9a9a" font-family="Liberation Sans">150</text></svg>
<div class="a" style="left:1368px;top:208px;width:4px;height:606px;background:#f0f0f0"></div>
<div class="a" style="left:1346px;top:244px;width:40px;height:28px;background:#fff;border-radius:14px;box-shadow:0 0 28px 4px rgba(0,0,0,.09)"></div>
<svg style="left:1356px;top:252px" width="9" height="12"><path d="M7 1L2 6l5 5" fill="none" stroke="#666" stroke-width="1.3"/></svg>
<div class="a" style="left:1187px;top:743px;width:190px;height:80px;border:3px solid #acacac"></div>
</body></html>
